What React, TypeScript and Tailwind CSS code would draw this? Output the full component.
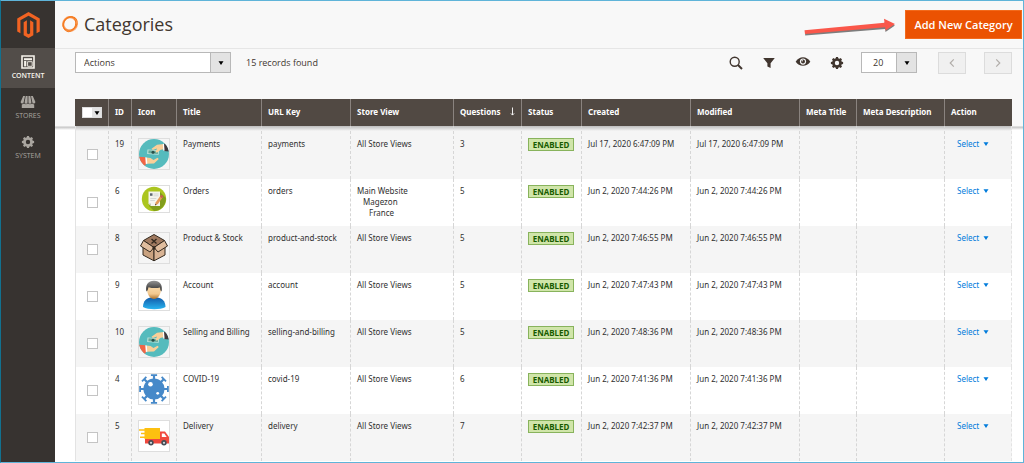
import { useState, type ReactNode } from "react";
import { FaMagento } from "react-icons/fa";

type IconKind = "payments" | "orders" | "box" | "account" | "virus" | "truck";

type Category = {
  id: number;
  icon: IconKind;
  title: string;
  urlKey: string;
  stores: string[];
  questions: number;
  date: string;
};

const categories: Category[] = [
  { id: 19, icon: "payments", title: "Payments", urlKey: "payments", stores: ["All Store Views"], questions: 3, date: "Jul 17, 2020 6:47:09 PM" },
  { id: 6, icon: "orders", title: "Orders", urlKey: "orders", stores: ["Main Website", "Magezon", "France"], questions: 5, date: "Jun 2, 2020 7:44:26 PM" },
  { id: 8, icon: "box", title: "Product & Stock", urlKey: "product-and-stock", stores: ["All Store Views"], questions: 5, date: "Jun 2, 2020 7:46:55 PM" },
  { id: 9, icon: "account", title: "Account", urlKey: "account", stores: ["All Store Views"], questions: 5, date: "Jun 2, 2020 7:47:43 PM" },
  { id: 10, icon: "payments", title: "Selling and Billing", urlKey: "selling-and-billing", stores: ["All Store Views"], questions: 5, date: "Jun 2, 2020 7:48:36 PM" },
  { id: 4, icon: "virus", title: "COVID-19", urlKey: "covid-19", stores: ["All Store Views"], questions: 6, date: "Jun 2, 2020 7:41:36 PM" },
  { id: 5, icon: "truck", title: "Delivery", urlKey: "delivery", stores: ["All Store Views"], questions: 7, date: "Jun 2, 2020 7:42:37 PM" }
];

const columns = [
  { label: "ID", width: "w-[23px]" },
  { label: "Icon", width: "w-[45px]" },
  { label: "Title", width: "w-[85px]" },
  { label: "URL Key", width: "w-[89px]" },
  { label: "Store View", width: "w-[103px]" },
  { label: "Questions", width: "w-[68px]", sorted: true },
  { label: "Status", width: "w-[60px]" },
  { label: "Created", width: "w-[109px]" },
  { label: "Modified", width: "w-[109px]" },
  { label: "Meta Title", width: "w-[57px]" },
  { label: "Meta Description", width: "w-[88px]" },
  { label: "Action", width: "w-[68px]" }
];

const storeIndent = ["", "pl-1.5", "pl-3"];

export default function App() {
  const [selected, setSelected] = useState<number[]>([]);

  function toggle(id: number) {
    setSelected((current) =>
      current.includes(id) ? current.filter((item) => item !== id) : [...current, id]
    );
  }

  return (
    <div className="flex min-h-screen border border-[#5fb4d9] border-l-[#12718f] bg-white font-['Open_Sans','Noto_Sans',sans-serif] text-[8px] leading-[11px] text-[#303030]">
      <Sidebar />
      <main className="flex min-w-0 flex-1 flex-col">
        <header className="flex h-12 items-center border-b border-[#e6e6e6] bg-[#f8f8f8] pr-px pb-px pl-1.5">
          <Spinner />
          <h1 className="ml-[5px] flex-1 text-[18px] leading-6 text-[#41362f]">Categories</h1>
          <PointerArrow />
          <button
            type="button"
            className="ml-[9px] h-[29px] w-[117px] border border-[#f26a1c] bg-[#eb5202] text-[11px] font-semibold text-white"
          >
            Add New Category
          </button>
        </header>
        <Toolbar />
        <div className="bg-[linear-gradient(#f8f8f8_27px,#c4c4c4_28px,#fff_31px)] pr-[11px] pl-5">
          <table className="w-full table-fixed border-separate border-spacing-0 text-left font-['Noto_Sans','Open_Sans',sans-serif]">
            <thead>
              <tr className="h-[27px] bg-[#514943] text-white">
                <th className="w-[33px] p-0 pl-[7px]">
                  <button
                    type="button"
                    aria-label="Select rows"
                    className="flex h-[11px] w-5 border border-[#ddd] bg-white"
                  >
                    <span className="ml-auto flex h-full w-[9px] items-center justify-center bg-[#e3e3e3]">
                      <Caret className="text-black" />
                    </span>
                  </button>
                </th>
                {columns.map((column) => (
                  <th
                    key={column.label}
                    className={`${column.width} border-l border-[#8a837f] px-1.5 pb-0.5 font-bold whitespace-nowrap`}
                  >
                    <span className="flex items-center justify-between">
                      {column.label}
                      {column.sorted ? <SortArrow /> : null}
                    </span>
                  </th>
                ))}
              </tr>
            </thead>
            <tbody>
              {categories.map((category, index) => (
                <Row
                  key={category.id}
                  category={category}
                  index={index}
                  checked={selected.includes(category.id)}
                  onToggle={() => toggle(category.id)}
                />
              ))}
            </tbody>
          </table>
        </div>
      </main>
    </div>
  );
}

function Row({
  category,
  index,
  checked,
  onToggle
}: {
  category: Category;
  index: number;
  checked: boolean;
  onToggle: () => void;
}) {
  const first = index === 0;
  const background = first
    ? "h-[53px] bg-[linear-gradient(#bdbdbd,#f5f5f5_5px)]"
    : index % 2 === 0
      ? "h-[47px] bg-[#f5f5f5]"
      : "h-[47px] bg-white";
  const cell = `border-l border-dashed border-[#d6d6d6] px-1.5 pb-0 align-top ${first ? "pt-3" : "pt-1.5"}`;

  return (
    <tr className={background}>
      <td className={`border-l border-[#e3e3e3] pr-0 pb-0 pl-[11px] align-middle ${first ? "pt-1" : "pt-0"}`}>
        <input
          type="checkbox"
          aria-label={`Select ${category.title}`}
          checked={checked}
          onChange={onToggle}
          className="block size-[11px] appearance-none border border-[#c4c4c4] bg-white checked:bg-[#514943]"
        />
      </td>
      <td className={cell}>{category.id}</td>
      <td className={cell}>
        <span className="block w-8 border border-[#dedede]">
          <Thumbnail kind={category.icon} />
        </span>
      </td>
      <td className={cell}>{category.title}</td>
      <td className={cell}>{category.urlKey}</td>
      <td className={cell}>
        {category.stores.map((store, level) => (
          <div key={store} className={storeIndent[level]}>
            {store}
          </div>
        ))}
      </td>
      <td className={cell}>{category.questions}</td>
      <td className={cell}>
        <span className="block w-[46px] border border-[#88b35c] bg-[#d0e5a9] text-center leading-[11px] font-bold text-[#185b00]">
          ENABLED
        </span>
      </td>
      <td className={`${cell} whitespace-nowrap`}>{category.date}</td>
      <td className={`${cell} whitespace-nowrap`}>{category.date}</td>
      <td className={cell} />
      <td className={cell} />
      <td className={`${cell} border-r border-r-[#e3e3e3]`}>
        <button type="button" className="ml-1.5 flex items-center gap-1 text-[#007bdb]">
          Select
          <Caret className="text-[#007bdb]" />
        </button>
      </td>
    </tr>
  );
}

function Sidebar() {
  return (
    <nav className="flex w-[54px] shrink-0 flex-col bg-[#373330] text-[7px] leading-[9px]">
      <a href="#home" aria-label="Magento" className="flex h-[47px] items-center justify-center text-[#f26322]">
        <FaMagento className="h-[26px] w-[23px]" />
      </a>
      <NavItem label="CONTENT" active>
        <svg viewBox="0 0 14 14" className="size-3.5" fill="none" stroke="currentColor">
          <path d="M1 1h12v12H1z" strokeWidth="1.6" />
          <path d="M3 4.2h8" strokeWidth="2" />
          <path d="M4.2 6v5.4" strokeWidth="2.2" />
          <path d="M6.6 6.7h4.6v4.6H6.6z" strokeWidth="0.9" />
        </svg>
      </NavItem>
      <NavItem label="STORES">
        <svg viewBox="0 0 16 14" className="h-3.5 w-4" fill="currentColor">
          <path d="M3.2 1h1.8L3.7 7.3a1.5 1.5 0 0 1-3-.6zM5.7 1h1.9v6.2a1.5 1.5 0 0 1-3 0zM8.4 1h1.9l1.100 6.200a1.500 1.500 0 0 1-3 0zM11 1h1.800l2.500 5.700a1.500 1.500 0 0 1-3 .600z" />
          <path d="M1.800 9.400c.9 0 1.700-.3 2.200-.8.9 1 2.900 1 4 0 1 1 3 1 4 0 .6.5 1.300.8 2.200.8V13H1.800z" />
        </svg>
      </NavItem>
      <NavItem label="SYSTEM">
        <Gear className="size-3.5" />
      </NavItem>
    </nav>
  );
}

function NavItem({ label, active, children }: { label: string; active?: boolean; children: ReactNode }) {
  return (
    <a
      href={`#${label.toLowerCase()}`}
      className={`flex h-10 flex-col items-center gap-0.5 pt-[7px] ${
        active ? "bg-[#524d49] font-semibold text-[#f7f3eb]" : "text-[#aaa6a0]"
      }`}
    >
      {children}
      <span>{label}</span>
    </a>
  );
}

function Toolbar() {
  return (
    <div className="flex h-[50px] items-start bg-[#f8f8f8] pt-[3px] pr-[11px] pl-5 text-[9px] text-[#41362f]">
      <DropDown label="Actions" options={["Actions", "Delete", "Enable", "Disable"]} width="w-[156px]" indent="pl-2" />
      <p className="ml-[15px] flex-1 leading-[21px]">15 records found</p>
      <div className="flex h-[21px] items-center gap-[19px] text-[#41362f]">
        <button type="button" aria-label="Search">
          <svg viewBox="0 0 14 14" className="size-3.5" fill="none" stroke="currentColor">
            <circle cx="5.700" cy="5.700" r="4.500" strokeWidth="1.400" />
            <path d="M9 9l4 4" strokeWidth="2" />
          </svg>
        </button>
        <button type="button" aria-label="Filters">
          <svg viewBox="0 0 14 14" className="size-3.5" fill="currentColor">
            <path d="M1.200 2h11.600L8.600 7.200V12l-3.200-1.500V7.200z" />
          </svg>
        </button>
        <button type="button" aria-label="Default View">
          <svg viewBox="0 0 16 14" className="h-3.5 w-4">
            <path d="M.700 5.800C4-.2 12-.2 15.300 5.800 12 11 4 11 .700 5.800z" fill="currentColor" />
            <circle cx="8" cy="5.600" r="3.100" fill="#f8f8f8" />
            <circle cx="8" cy="5.600" r="2" fill="currentColor" />
            <circle cx="7.200" cy="4.800" r=".700" fill="#f8f8f8" />
          </svg>
        </button>
        <button type="button" aria-label="Columns">
          <Gear className="size-3.5" />
        </button>
      </div>
      <div className="ml-[17px]">
        <DropDown label="Rows per page" options={["20", "30", "50", "100"]} width="w-14" indent="pl-[11px]" />
      </div>
      <PageButton label="Previous page" className="ml-[21px]" path="M8 2L3 7l5 5" />
      <PageButton label="Next page" className="ml-[18px]" path="M3 2l5 5-5 5" />
    </div>
  );
}

function DropDown({
  label,
  options,
  width,
  indent
}: {
  label: string;
  options: string[];
  width: string;
  indent: string;
}) {
  return (
    <div className={`relative h-[21px] ${width}`}>
      <select
        aria-label={label}
        className={`block h-full w-full appearance-none border border-[#b8b8b8] bg-white leading-[19px] ${indent}`}
      >
        {options.map((option) => (
          <option key={option}>{option}</option>
        ))}
      </select>
      <span className="pointer-events-none absolute inset-y-0 right-0 flex w-[21px] items-center justify-center border border-[#b8b8b8] bg-[#e3e3e3]">
        <Caret className="text-black" />
      </span>
    </div>
  );
}

function PageButton({ label, path, className }: { label: string; path: string; className: string }) {
  return (
    <button
      type="button"
      aria-label={label}
      disabled
      className={`flex h-[22px] w-7 items-center justify-center border border-[#dcdcdc] bg-[#f0f0f0] text-[#b0aca8] ${className}`}
    >
      <svg viewBox="0 0 11 14" className="h-2.5 w-2" fill="none" stroke="currentColor" strokeWidth="1.600">
        <path d={path} />
      </svg>
    </button>
  );
}

function Caret({ className }: { className: string }) {
  return (
    <svg viewBox="0 0 6 4" className={`h-1 w-1.5 ${className}`} fill="currentColor">
      <path d="M.500.300h5L3 3.900z" />
    </svg>
  );
}

function SortArrow() {
  return (
    <svg viewBox="0 0 5 9" className="h-[9px] w-[5px]" fill="none" stroke="currentColor" strokeWidth=".900">
      <path d="M2.500.500v7.500M.900 6.400l1.600 1.700 1.600-1.700" />
    </svg>
  );
}

function Gear({ className }: { className: string }) {
  return (
    <svg viewBox="0 0 14 14" className={className}>
      <circle cx="7" cy="7" r="3.500" fill="none" stroke="currentColor" strokeWidth="2.600" />
      {[0, 45, 90, 135, 180, 225, 270, 315].map((angle) => (
        <path key={angle} d="M5.600 3L6 .900h2L8.400 3z" fill="currentColor" transform={`rotate(${angle} 7 7)`} />
      ))}
    </svg>
  );
}

function Spinner() {
  return (
    <svg viewBox="0 0 18 18" className="size-[18px]" fill="none">
      <circle cx="9" cy="9" r="6.800" stroke="#fba76f" strokeWidth="2.200" />
      <ellipse cx="9.300" cy="8.700" rx="7.600" ry="6.200" stroke="#f47b20" strokeWidth="1.100" transform="rotate(-35 9 9)" />
      <ellipse cx="8.700" cy="9.300" rx="6" ry="7.600" stroke="#f47b20" strokeWidth="1" transform="rotate(20 9 9)" />
    </svg>
  );
}

function PointerArrow() {
  return (
    <svg viewBox="0 0 92 30" className="h-[30px] w-[92px] shrink-0">
      <path d="M1 23l80-5.500-.500-4.500L91 16.500l-9.500 6.500-.300-3L1.200 26.500z" fill="#7d7d7d" />
      <path d="M.500 21.200l80-7.500-.500-4L91 15l-9.500 6.500-.300-3.300L1 25z" fill="#fa574a" />
    </svg>
  );
}

function Thumbnail({ kind }: { kind: IconKind }) {
  if (kind === "payments") {
    return (
      <svg viewBox="0 0 30 30" className="block">
        <defs>
          <clipPath id="payments-disc">
            <circle cx="15" cy="15" r="15" />
          </clipPath>
        </defs>
        <g clipPath="url(#payments-disc)">
          <path d="M0 0h30v30H0z" fill="#55bbbd" />
          <path d="M8.500 10.500l11.500.800-.300 4.500-11.500-.800z" fill="#c4e5dc" />
          <path d="M9.500 11.300l9.600.700-.200 3-9.600-.700z" fill="#65a99a" />
          <circle cx="14" cy="13.200" r="1.500" fill="#284f48" />
          <path d="M25 5l-7 .800-5.500 3.900 1.300 1.200 4.200-1.400-1.500 3.300 1.300 1 4-3 4.200-.800z" fill="#f9cf98" />
          <path d="M24.500 5l3-1 2.500 8.500-5-.500z" fill="#41393d" />
          <path d="M23.800 5l1.200-.200.600 7-1.400-.400z" fill="#fff" />
          <path d="M7.500 18.600l4 .500 3 2 4-2.300 1.300 1.100-4.800 4.500-7.500.400z" fill="#f9cf98" />
          <path d="M0 17.800l6.500.5 1 6.200-3 4-5-3z" fill="#f16544" />
          <path d="M6.300 18.300l1.500.200.500 6.200-1.500.300z" fill="#fff" />
        </g>
      </svg>
    );
  }

  if (kind === "orders") {
    return (
      <svg viewBox="0 0 30 26" className="block">
        <circle cx="15" cy="13" r="12.200" fill="#abc51f" />
        <path d="M21 6l5.800 6c.6 7-5.300 13-11.800 13l-5-5z" fill="#819d1b" />
        <path d="M9.500 5.500H21V20H12l-2.500-2.500z" fill="#f4f4ee" />
        <path d="M9.500 17.500H12V20z" fill="#c4c7ba" />
        <path d="M11 7.300h2.500v2.500H11z" fill="#5b6570" />
        <path d="M14.500 8h5M14.500 9.800h5M11.300 12.500h6M11.300 14.500h4.500" stroke="#c0c4c4" strokeWidth=".600" />
        <path d="M16 19.500l.600-3 5-7 2.300 1.600-5 7z" fill="#e59a57" />
        <path d="M20.800 10.700l1.500-2 2.300 1.600-1.500 2z" fill="#c6614f" />
        <path d="M16 19.500l.400-1.800 1.200.900z" fill="#433" />
      </svg>
    );
  }

  if (kind === "box") {
    return (
      <svg viewBox="0 0 30 30" className="block" stroke="#33291f" strokeWidth="1" strokeLinejoin="round">
        <path d="M4 9.500l11 6v12.300L4 22z" fill="#c9a280" />
        <path d="M15 15.500v12.300L26 22V9.500z" fill="#d8b394" />
        <path d="M15 1.500L4.500 7.500 15 14.500l10.500-7z" fill="#a07a60" />
        <path d="M4.500 7.500L15 14.500l-4 4.500L1.500 13z" fill="#e0bd9e" />
        <path d="M25.500 7.500L15 14.500l4 4.500 9.500-6z" fill="#e0bd9e" />
        <path d="M12.500 6l5 4.500M17.500 6l-5 4.500" strokeWidth="1.400" />
        <circle cx="15" cy="15" r="1.200" fill="#33291f" />
      </svg>
    );
  }

  if (kind === "account") {
    return (
      <svg viewBox="0 0 30 30" className="block">
        <defs>
          <linearGradient id="account-shirt" x1="0" y1="0" x2="0" y2="1">
            <stop offset="0" stopColor="#125ba9" />
            <stop offset="1" stopColor="#28b4f0" />
          </linearGradient>
          <linearGradient id="account-face" x1="0" y1="0" x2="0" y2="1">
            <stop offset="0" stopColor="#fae4bc" />
            <stop offset=".7" stopColor="#f3c88e" />
            <stop offset="1" stopColor="#a9702a" />
          </linearGradient>
          <linearGradient id="account-hair" x1="0" y1="0" x2="0" y2="1">
            <stop offset="0" stopColor="#929292" />
            <stop offset="1" stopColor="#262626" />
          </linearGradient>
        </defs>
        <path d="M4 27c0-6 4-9.500 8-9.500h6c4.500 0 8.500 3.500 8.500 9.500-5 3-17.500 3-22.500 0z" fill="url(#account-shirt)" />
        <path d="M8 9c0-5 3-7 7-7s7 2 7 7c0 6-3.500 10-7 10S8 15 8 9z" fill="url(#account-face)" />
        <path d="M7.500 11.500C6 5 9 .800 15 .800S24 5 22.500 11.500c-1.200-1-1.300-2.500-1.500-4-3 .800-8 .800-11.500-.300-.500 1.800-.800 3.300-2 4.300z" fill="url(#account-hair)" />
      </svg>
    );
  }

  if (kind === "virus") {
    return (
      <svg viewBox="0 0 30 30" className="block bg-white">
        <circle cx="15" cy="15" r="10.600" fill="#4689c9" />
        {[0, 45, 90, 135, 180, 225, 270, 315].map((angle) => (
          <path
            key={angle}
            d="M13.900 6V2h-2V.200h6.200V2h-2v4z"
            fill="#4689c9"
            transform={`rotate(${angle} 15 15)`}
          />
        ))}
        <circle cx="11.500" cy="10.200" r="2.300" fill="#fff" />
        <circle cx="18.700" cy="19.300" r="1.400" fill="#fff" />
      </svg>
    );
  }

  return (
    <svg viewBox="0 0 30 30" className="block bg-white">
      <path d="M6 17h15v5.500H6z" fill="#f0483e" />
      <path d="M21 10.500h5l4 5.500v6.500h-9z" fill="#f0483e" />
      <path d="M22.800 12.500h2.500l2.400 3.500h-4.900z" fill="#fff" />
      <path d="M5.500 7H21v11H5.500z" fill="#fdc010" />
      <path d="M0 8.200h7v1.500H0zM2 11.800h5v1.500H2zM1 15.400h6v1.500H1z" fill="#fdc010" />
      <circle cx="12" cy="21.800" r="2.700" fill="#444c54" />
      <circle cx="12" cy="21.800" r="1.100" fill="#d5dbe0" />
      <circle cx="25" cy="21.800" r="2.700" fill="#444c54" />
      <circle cx="25" cy="21.800" r="1.100" fill="#d5dbe0" />
    </svg>
  );
}
